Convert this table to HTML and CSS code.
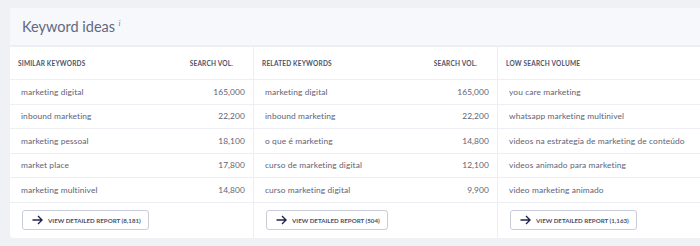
FILE: index.html
```html
<!DOCTYPE html>
<html lang="en">
<head>
    <meta charset="UTF-8">
    <title>Keyword ideas</title>
    <link rel="stylesheet" href="styles.css">
</head>
<body>
    <div class="card">
        <div class="card-head">
            <h1>Keyword ideas <sup>i</sup></h1>
        </div>
        <div class="columns">
            <div class="col">
                <div class="col-head"><span>Similar keywords</span><span class="vol-head">Search vol.</span></div>
                <div class="row"><span>marketing digital</span><span>165,000</span></div>
                <div class="row"><span>inbound marketing</span><span>22,200</span></div>
                <div class="row"><span>marketing pessoal</span><span>18,100</span></div>
                <div class="row"><span>market place</span><span>17,800</span></div>
                <div class="row"><span>marketing multinivel</span><span>14,800</span></div>
                <div class="foot">
                    <button class="report-btn">
                        <svg width="11" height="10" viewBox="0 0 11 10"><path d="M0.5 5H10M6 1L10 5L6 9" fill="none" stroke="#1f2452" stroke-width="1.4"/></svg>
                        View detailed report (8,181)
                    </button>
                </div>
            </div>
            <div class="col">
                <div class="col-head"><span>Related keywords</span><span class="vol-head">Search vol.</span></div>
                <div class="row"><span>marketing digital</span><span>165,000</span></div>
                <div class="row"><span>inbound marketing</span><span>22,200</span></div>
                <div class="row"><span>o que é marketing</span><span>14,800</span></div>
                <div class="row"><span>curso de marketing digital</span><span>12,100</span></div>
                <div class="row"><span>curso marketing digital</span><span>9,900</span></div>
                <div class="foot">
                    <button class="report-btn">
                        <svg width="11" height="10" viewBox="0 0 11 10"><path d="M0.5 5H10M6 1L10 5L6 9" fill="none" stroke="#1f2452" stroke-width="1.4"/></svg>
                        View detailed report (504)
                    </button>
                </div>
            </div>
            <div class="col">
                <div class="col-head"><span>Low search volume</span></div>
                <div class="row"><span>you care marketing</span></div>
                <div class="row"><span>whatsapp marketing multinivel</span></div>
                <div class="row"><span>videos na estrategia de marketing de conteúdo</span></div>
                <div class="row"><span>videos animado para marketing</span></div>
                <div class="row"><span>video marketing animado</span></div>
                <div class="foot">
                    <button class="report-btn">
                        <svg width="11" height="10" viewBox="0 0 11 10"><path d="M0.5 5H10M6 1L10 5L6 9" fill="none" stroke="#1f2452" stroke-width="1.4"/></svg>
                        View detailed report (1,163)
                    </button>
                </div>
            </div>
        </div>
    </div>
</body>
</html>
```

FILE: styles.css
```css
body {
    margin: 0;
    padding: 8px 0 0 10px;
    background: #f0f1f5;
    font-family: Lato, "Open Sans", sans-serif;
    overflow: hidden;
}
.card {
    width: 690px;
    background: #fff;
    border-radius: 4px 0 0 4px;
}
.card-head {
    height: 37px;
    background: #f7f8fb;
    border-bottom: 2px solid #eceef3;
    border-radius: 4px 0 0 0;
    display: flex;
    align-items: center;
    padding-left: 12px;
}
.card-head h1 {
    margin: 0;
    font-size: 14.5px;
    font-weight: 400;
    color: #626880;
}
.card-head sup {
    font-size: 7px;
    font-style: italic;
}
.columns {
    display: grid;
    grid-template-columns: 243px 244px 1fr;
}
.col + .col {
    border-left: 1px solid #eceef3;
}
.col-head {
    height: 32px;
    display: flex;
    align-items: center;
    justify-content: space-between;
    padding: 0 20px 0 8px;
    font-size: 6.5px;
    font-weight: 700;
    text-transform: uppercase;
    color: #4c536e;
    letter-spacing: 0.2px;
    border-bottom: 1px solid #eceef3;
}
.row {
    height: 23.5px;
    display: flex;
    align-items: center;
    justify-content: space-between;
    padding: 0 8px 0 11px;
    font-size: 8.4px;
    color: #5e6377;
    letter-spacing: 0.1px;
    border-bottom: 1px solid #eceef3;
}
.foot {
    height: 35px;
    display: flex;
    align-items: center;
    padding-left: 12px;
}
.report-btn {
    height: 20px;
    display: flex;
    align-items: center;
    gap: 5px;
    padding: 0 7px 0 9px;
    background: #fff;
    border: 1px solid #c9ccdb;
    border-radius: 3px;
    font-family: Lato, sans-serif;
    font-size: 6.2px;
    font-weight: 700;
    text-transform: uppercase;
    color: #4a4f6b;
}
```
